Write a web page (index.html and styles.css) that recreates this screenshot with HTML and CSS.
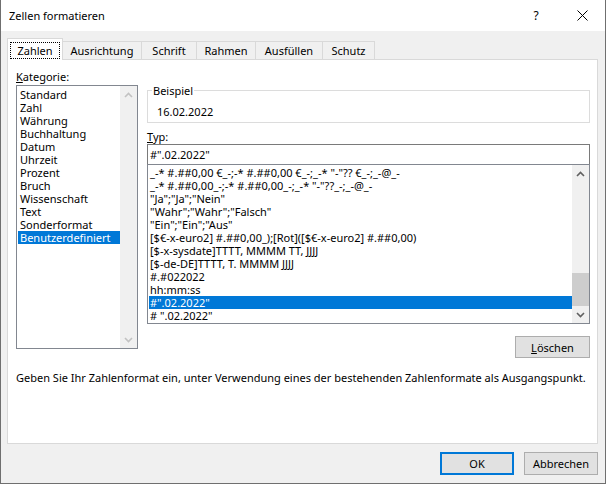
FILE: index.html
```html
<!DOCTYPE html>
<html>
<head>
  <meta charset="utf-8">
  <meta name="viewport" content="width=device-width, initial-scale=1">
  <title>Zellen formatieren</title>

  <link rel="stylesheet" href="styles.css">

</head>
<body>
  <div class="window">
    <div class="titlebar">
      <span class="title">Zellen formatieren</span>
      <span class="title-btn help">?</span>
      <span class="title-btn close">
        <svg width="11" height="11" viewBox="0 0 11 11"><path d="M0.5 0.5L10.5 10.5M10.5 0.5L0.5 10.5" stroke="#000" stroke-width="1" fill="none"/></svg>
      </span>
    </div>

    <div class="frame">
      <div class="tabs">
        <div class="tab tab-zahlen active"><span class="focus">Zahlen</span></div>
        <div class="tab tab-ausrichtung">Ausrichtung</div>
        <div class="tab tab-schrift">Schrift</div>
        <div class="tab tab-rahmen">Rahmen</div>
        <div class="tab tab-ausfuellen">Ausfüllen</div>
        <div class="tab tab-schutz">Schutz</div>
      </div>

      <div class="panel">
        <div class="columns">
          <div class="category">
            <div class="label"><u>K</u>ategorie:</div>
            <div class="listbox">
              <ul class="items">
                <li>Standard</li>
                <li>Zahl</li>
                <li>Währung</li>
                <li>Buchhaltung</li>
                <li>Datum</li>
                <li>Uhrzeit</li>
                <li>Prozent</li>
                <li>Bruch</li>
                <li>Wissenschaft</li>
                <li>Text</li>
                <li>Sonderformat</li>
                <li class="selected">Benutzerdefiniert</li>
              </ul>
              <div class="scrollbar disabled">
                <div class="sb-btn"><svg width="9" height="6" viewBox="0 0 9 6"><path d="M1 5L4.5 1.5L8 5" stroke="currentColor" stroke-width="1.6" fill="none"/></svg></div>
                <div class="sb-track"></div>
                <div class="sb-btn"><svg width="9" height="6" viewBox="0 0 9 6"><path d="M1 1L4.5 4.5L8 1" stroke="currentColor" stroke-width="1.6" fill="none"/></svg></div>
              </div>
            </div>
          </div>

          <div class="details">
            <fieldset class="sample">
              <legend>Beispiel</legend>
              <div class="sample-value">16.02.2022</div>
            </fieldset>

            <div class="label typ-label"><u>T</u>yp:</div>
            <div class="textbox">#".02.2022"</div>

            <div class="listbox formats">
              <ul class="items">
                <li>_-* #.##0,00 €_-;-* #.##0,00 €_-;_-* "-"?? €_-;_-@_-</li>
                <li>_-* #.##0,00_-;-* #.##0,00_-;_-* "-"??_-;_-@_-</li>
                <li>"Ja";"Ja";"Nein"</li>
                <li>"Wahr";"Wahr";"Falsch"</li>
                <li>"Ein";"Ein";"Aus"</li>
                <li>[$€-x-euro2] #.##0,00_);[Rot]([$€-x-euro2] #.##0,00)</li>
                <li>[$-x-sysdate]TTTT, MMMM TT, JJJJ</li>
                <li>[$-de-DE]TTTT, T. MMMM JJJJ</li>
                <li>#.#022022</li>
                <li>hh:mm:ss</li>
                <li class="selected">#".02.2022"</li>
                <li># ".02.2022"</li>
              </ul>
              <div class="scrollbar">
                <div class="sb-btn"><svg width="9" height="6" viewBox="0 0 9 6"><path d="M1 5L4.5 1.5L8 5" stroke="currentColor" stroke-width="1.6" fill="none"/></svg></div>
                <div class="sb-track"><div class="sb-thumb"></div></div>
                <div class="sb-btn"><svg width="9" height="6" viewBox="0 0 9 6"><path d="M1 1L4.5 4.5L8 1" stroke="currentColor" stroke-width="1.6" fill="none"/></svg></div>
              </div>
            </div>

            <div class="delete-row">
              <button class="btn btn-delete"><u>L</u>öschen</button>
            </div>
          </div>
        </div>

        <p class="hint">Geben Sie Ihr Zahlenformat ein, unter Verwendung eines der bestehenden Zahlenformate als Ausgangspunkt.</p>
      </div>

      <div class="actions">
        <button class="btn btn-default">OK</button>
        <button class="btn">Abbrechen</button>
      </div>
    </div>
  </div>
</body>
</html>
```

FILE: styles.css
```css
* {
  margin: 0;
  padding: 0;
  box-sizing: border-box;
}

body {
  font-family: "Noto Sans", sans-serif;
  font-size: 11px;
  line-height: 13px;
  color: #000;
  background: #fff;
}

u {
  text-decoration: underline;
  text-underline-offset: 1px;
}

.window {
  width: 606px;
  height: 484px;
  border: 1px solid #6f6f6f;
  border-top: none;
  display: flex;
  flex-direction: column;
}

/* title bar */
.titlebar {
  height: 31px;
  background: #fff;
  display: flex;
  align-items: center;
}
.titlebar > .title {
  flex: 1;
  padding-left: 8px;
}
.titlebar > .title-btn {
  width: 46px;
  height: 31px;
  display: flex;
  align-items: center;
  justify-content: center;
}
.titlebar > .help {
  font-size: 12px;
}

/* dialog body */
.frame {
  flex: 1;
  background: #f0f0f0;
  padding: 7px 7px 0 6px;
}

.tabs {
  display: flex;
  align-items: flex-start;
  height: 22px;
  position: relative;
  z-index: 1;
}
.tabs > .tab {
  height: 18px;
  margin-top: 3px;
  margin-left: -1px;
  background: #f0f0f0;
  border: 1px solid #d9d9d9;
  border-bottom: none;
  display: flex;
  justify-content: center;
  padding-top: 2px;
}
.tabs > .tab.active {
  height: 22px;
  margin-top: 0;
  margin-left: 0;
  background: #fff;
  padding-top: 3px;
  position: relative;
  z-index: 2;
}
.tabs > .tab > .focus {
  width: 50px;
  height: 17px;
  border: 1px dotted #000;
  display: flex;
  justify-content: center;
  padding-top: 1px;
}
.tab-zahlen { width: 56px; }
.tab-ausrichtung { width: 80px; }
.tab-schrift { width: 56px; }
.tab-rahmen { width: 60px; }
.tab-ausfuellen { width: 68px; }
.tab-schutz { width: 53px; }

.panel {
  height: 385px;
  margin-top: -1px;
  background: #fff;
  border: 1px solid #d9d9d9;
}

.columns {
  display: flex;
  padding-left: 8px;
}

.label {
  height: 13px;
}

.category {
  width: 122px;
  padding-top: 10px;
}
.category > .listbox {
  margin-top: 2px;
  height: 264px;
}

.listbox {
  border: 1px solid #828790;
  background: #fff;
  display: flex;
}
.listbox > .items {
  list-style: none;
  flex: 1;
  min-width: 0;
  padding: 2px 0 0 1px;
  overflow: hidden;
}
.listbox > .items > li {
  height: 13px;
  padding-left: 2px;
  white-space: nowrap;
}
.listbox > .items > li.selected {
  background: #0078d7;
  color: #fff;
}

.scrollbar {
  width: 17px;
  background: #f0f0f0;
  color: #606060;
  display: flex;
  flex-direction: column;
}
.scrollbar.disabled {
  color: #c2c2c2;
}
.scrollbar > .sb-btn {
  height: 17px;
  display: flex;
  align-items: center;
  justify-content: center;
}
.scrollbar > .sb-track {
  flex: 1;
  display: flex;
  flex-direction: column;
  justify-content: flex-end;
}
.scrollbar .sb-thumb {
  height: 33px;
  background: #cdcdcd;
}

.details {
  width: 443px;
  margin-left: 9px;
  padding-top: 24px;
}

.sample {
  border: 1px solid #dcdcdc;
  padding: 8px 0 4px 9px;
  min-width: 0;
}
.sample > legend {
  margin-left: -5px;
  padding: 0 1px;
  line-height: 13px;
}

.typ-label {
  margin-top: 7px;
}

.textbox {
  margin-top: 1px;
  height: 21px;
  border: 1px solid #7a7a7a;
  background: #fff;
  line-height: 19px;
  padding-left: 2px;
}

.formats {
  margin-top: -1px;
  height: 160px;
}
.formats > .items {
  padding-top: 1px;
}
.formats > .items > li {
  padding-left: 1px;
}

.delete-row {
  margin-top: 12px;
  display: flex;
  justify-content: flex-end;
}

.btn {
  font-family: inherit;
  font-size: 11px;
  line-height: 13px;
  color: #000;
  background: #e1e1e1;
  border: 1px solid #adadad;
  display: flex;
  align-items: center;
  justify-content: center;
}
.btn-delete {
  width: 75px;
  height: 22px;
}

.hint {
  margin-top: 13px;
  padding-left: 8px;
}

.actions {
  margin-top: 8px;
  display: flex;
  justify-content: flex-end;
  gap: 10px;
}
.actions > .btn {
  width: 74px;
  height: 23px;
}
.actions > .btn-default {
  border: 2px solid #0078d7;
}
```
